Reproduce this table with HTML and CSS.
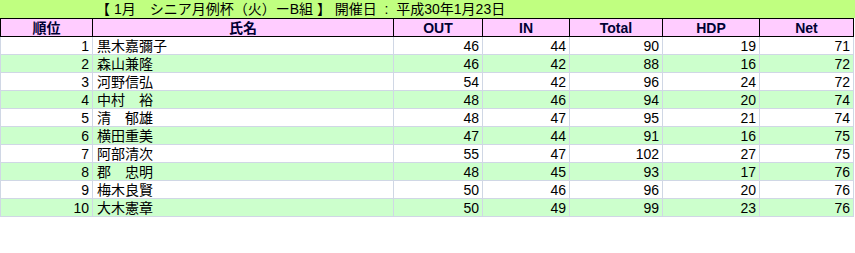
FILE: index.html
```html
<!DOCTYPE html>
<html lang="ja">
<head>
<meta charset="utf-8">
<link rel="stylesheet" href="styles.css">
</head>
<body>
<div class="title">【 1月　シニア月例杯（火）ーB組 】 開催日  :  平成30年1月23日</div>
<table class="score">
  <colgroup>
    <col class="c-rank"><col class="c-name"><col class="c-out"><col class="c-in"><col class="c-total"><col class="c-hdp"><col class="c-net">
  </colgroup>
  <thead>
    <tr><th>順位</th><th>氏名</th><th>OUT</th><th>IN</th><th>Total</th><th>HDP</th><th>Net</th></tr>
  </thead>
  <tbody>
    <tr><td class="num">1</td><td class="name">黒木嘉彌子</td><td class="num">46</td><td class="num">44</td><td class="num">90</td><td class="num">19</td><td class="num">71</td></tr>
    <tr class="alt"><td class="num">2</td><td class="name">森山兼隆</td><td class="num">46</td><td class="num">42</td><td class="num">88</td><td class="num">16</td><td class="num">72</td></tr>
    <tr><td class="num">3</td><td class="name">河野信弘</td><td class="num">54</td><td class="num">42</td><td class="num">96</td><td class="num">24</td><td class="num">72</td></tr>
    <tr class="alt"><td class="num">4</td><td class="name">中村　裕</td><td class="num">48</td><td class="num">46</td><td class="num">94</td><td class="num">20</td><td class="num">74</td></tr>
    <tr><td class="num">5</td><td class="name">清　郁雄</td><td class="num">48</td><td class="num">47</td><td class="num">95</td><td class="num">21</td><td class="num">74</td></tr>
    <tr class="alt"><td class="num">6</td><td class="name">横田重美</td><td class="num">47</td><td class="num">44</td><td class="num">91</td><td class="num">16</td><td class="num">75</td></tr>
    <tr><td class="num">7</td><td class="name">阿部清次</td><td class="num">55</td><td class="num">47</td><td class="num">102</td><td class="num">27</td><td class="num">75</td></tr>
    <tr class="alt"><td class="num">8</td><td class="name">郡　忠明</td><td class="num">48</td><td class="num">45</td><td class="num">93</td><td class="num">17</td><td class="num">76</td></tr>
    <tr><td class="num">9</td><td class="name">梅木良賢</td><td class="num">50</td><td class="num">46</td><td class="num">96</td><td class="num">20</td><td class="num">76</td></tr>
    <tr class="alt"><td class="num">10</td><td class="name">大木憲章</td><td class="num">50</td><td class="num">49</td><td class="num">99</td><td class="num">23</td><td class="num">76</td></tr>
  </tbody>
</table>
</body>
</html>
```

FILE: styles.css
```css
html, body {
  margin: 0;
  padding: 0;
  background: #ffffff;
}
body {
  font-family: "Liberation Sans", "Noto Sans CJK JP", sans-serif;
  font-size: 14px;
  color: #000000;
}
.title {
  height: 18px;
  line-height: 18px;
  background: #c0ff80;
  padding-left: 96px;
  white-space: pre;
  box-sizing: border-box;
}
.score {
  border-collapse: collapse;
  table-layout: fixed;
  width: 853px;
}
.c-rank { width: 92px; }
.c-name { width: 301px; }
.c-out { width: 89px; }
.c-in { width: 87px; }
.c-total { width: 93px; }
.c-hdp { width: 97px; }
.c-net { width: 94px; }
.score th {
  background: #ffccff;
  border: 1px solid #000000;
  height: 17px;
  padding: 0;
  font-weight: bold;
  color: #000033;
  text-align: center;
  line-height: 16px;
}
.score td {
  border: 1px solid #d0d7e5;
  height: 17px;
  padding: 0;
  line-height: 16px;
  white-space: nowrap;
}
.score tr.alt td {
  background: #ccffcc;
}
.score td.num {
  text-align: right;
  padding-right: 3px;
}
.score td.name {
  padding-left: 4px;
}
```
